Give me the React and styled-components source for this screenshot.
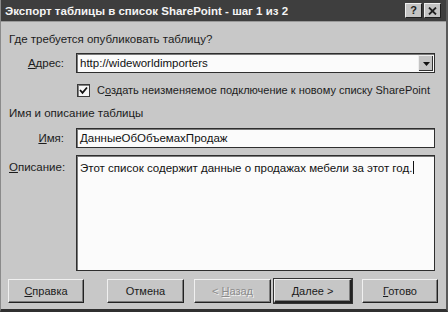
import React from "react";
import styled, { createGlobalStyle } from "styled-components";

const Global = createGlobalStyle`
  html, body { margin: 0; padding: 0; background: #c9c9c9; }
  body { font-family: "Liberation Sans", Arial, sans-serif; }
`;

const Window = styled.div`
  width: 448px;
  height: 312px;
  box-sizing: border-box;
  background: #c8c8c8;
  border-left: 1px solid #8a8a8a;
  border-right: 2px solid #5a5a5a;
  border-bottom: 3px solid #303030;
  display: flex;
  flex-direction: column;
  overflow: hidden;
`;

const TitleBar = styled.div`
  height: 21px;
  flex: none;
  background: #3e3e3e;
  border-bottom: 1px solid #9a9a9a;
  display: flex;
  align-items: center;
  justify-content: space-between;
  padding: 0 5px 0 4px;
`;

const Title = styled.span`
  color: #f4f4f4;
  font-weight: bold;
  font-size: 11.5px;
`;

const Controls = styled.div`
  display: flex;
  gap: 2px;
`;

const CtrlButton = styled.div`
  width: 15px;
  height: 13px;
  background: #c4c4c4;
  border-top: 1px solid #efefef;
  border-left: 1px solid #efefef;
  border-right: 1px solid #1e1e1e;
  border-bottom: 1px solid #1e1e1e;
  display: flex;
  align-items: center;
  justify-content: center;
  font-size: 11px;
  font-weight: bold;
  color: #202020;
  line-height: 1;
`;

const Body = styled.div`
  flex: 1;
  display: flex;
  flex-direction: column;
  padding: 10px 11px 0 8px;
  font-size: 11.5px;
  color: #1c1c1c;
`;

const SectionLabel = styled.div`
  height: 14px;
  line-height: 14px;
  margin-bottom: ${(p) => p.$mb || 0}px;
`;

const FieldGrid = styled.div`
  display: grid;
  grid-template-columns: 55px 1fr;
  column-gap: 12px;
  align-items: ${(p) => (p.$top ? "start" : "center")};
  margin-bottom: ${(p) => p.$mb || 0}px;
  flex: ${(p) => (p.$grow ? 1 : "none")};
`;

const FieldLabel = styled.div`
  text-align: right;
  line-height: 14px;
  padding-top: ${(p) => p.$pt || 0}px;
`;

const Box = styled.div`
  box-sizing: border-box;
  height: ${(p) => (p.$h ? `${p.$h}px` : "100%")};
  background: #fbfbfb;
  border: 1px solid #2e2e2e;
  box-shadow: inset 1px 1px 0 #7a7a7a;
  display: flex;
  align-items: ${(p) => (p.$top ? "flex-start" : "center")};
  padding: ${(p) => (p.$top ? "5px 0 0 3px" : "0 0 0 3px")};
  color: #111;
  position: relative;
`;

const Caret = styled.span`
  display: inline-block;
  width: 1px;
  height: 13px;
  background: #111;
  margin-left: 1px;
  vertical-align: -2px;
`;

const DropButton = styled.div`
  position: absolute;
  right: 1px;
  top: 1px;
  bottom: 1px;
  width: 15px;
  background: #c4c4c4;
  border-top: 1px solid #eee;
  border-left: 1px solid #eee;
  box-sizing: border-box;
  box-shadow: inset -1px -1px 0 #333;
  display: flex;
  align-items: center;
  justify-content: center;
`;

const CheckRow = styled.div`
  display: flex;
  align-items: center;
  gap: 7px;
  padding-left: 68px;
  height: 16px;
  margin-bottom: 8px;
  font-size: 11px;
`;

const CheckBox = styled.div`
  width: 13px;
  height: 13px;
  box-sizing: border-box;
  background: #f6f6f6;
  border: 1px solid #3a3a3a;
  box-shadow: inset 1px 1px 0 #808080;
  display: flex;
  align-items: center;
  justify-content: center;
`;

const U = styled.span`
  text-decoration: underline;
  text-underline-offset: 1px;
`;

const ButtonRow = styled.div`
  display: flex;
  padding: 8px 0 0 7px;
  height: 24px;
  margin-bottom: 6px;
  flex: none;
`;

const Btn = styled.div`
  box-sizing: border-box;
  width: ${(p) => p.$w || 77}px;
  margin-left: ${(p) => p.$ml || 0}px;
  height: 24px;
  background: #c6c6c6;
  border-top: 1px solid #f0f0f0;
  border-left: 1px solid #f0f0f0;
  border-right: ${(p) => (p.$default ? 2 : 1)}px solid #222;
  border-bottom: ${(p) => (p.$default ? 2 : 1)}px solid #222;
  box-shadow: inset -1px -1px 0 #7c7c7c
    ${(p) => (p.$default ? ", 0 0 0 1px #333" : "")};
  display: flex;
  align-items: center;
  justify-content: center;
  font-size: 11px;
  color: ${(p) => (p.$disabled ? "#8c8c8c" : "#1a1a1a")};
  text-shadow: ${(p) => (p.$disabled ? "1px 1px 0 #f2f2f2" : "none")};
`;

export default function App() {
  return (
    <>
      <Global />
      <Window>
        <TitleBar>
          <Title>Экспорт таблицы в список SharePoint - шаг 1 из 2</Title>
          <Controls>
            <CtrlButton>?</CtrlButton>
            <CtrlButton>
              <svg width="9" height="8" viewBox="0 0 9 8">
                <path d="M1 0.5 L8 7.5 M8 0.5 L1 7.5" stroke="#202020" strokeWidth="1.8" />
              </svg>
            </CtrlButton>
          </Controls>
        </TitleBar>
        <Body>
          <SectionLabel $mb={7}>Где требуется опубликовать таблицу?</SectionLabel>
          <FieldGrid $mb={9}>
            <FieldLabel>
              <U>А</U>дрес:
            </FieldLabel>
            <Box $h={20}>
              http://wideworldimporters
              <DropButton>
                <svg width="7" height="4" viewBox="0 0 7 4">
                  <path d="M0 0 H7 L3.5 4 Z" fill="#111" />
                </svg>
              </DropButton>
            </Box>
          </FieldGrid>
          <CheckRow>
            <CheckBox>
              <svg width="9" height="9" viewBox="0 0 9 9">
                <path d="M1 4 L3.5 6.8 L8 1.5" stroke="#111" strokeWidth="1.8" fill="none" />
              </svg>
            </CheckBox>
            <span>
              С<U>о</U>здать неизменяемое подключение к новому списку SharePoint
            </span>
          </CheckRow>
          <SectionLabel $mb={8}>Имя и описание таблицы</SectionLabel>
          <FieldGrid $mb={7}>
            <FieldLabel>
              <U>И</U>мя:
            </FieldLabel>
            <Box $h={20}>ДанныеОбОбъемахПродаж</Box>
          </FieldGrid>
          <FieldGrid $top $grow>
            <FieldLabel $pt={5}>
              <U>О</U>писание:
            </FieldLabel>
            <Box $top>
              <span>
                Этот список содержит данные о продажах мебели за этот год.
                <Caret />
              </span>
            </Box>
          </FieldGrid>
        </Body>
        <ButtonRow>
          <Btn $w={76}>
            <span>
              <U>С</U>правка
            </span>
          </Btn>
          <Btn $ml={23}>Отмена</Btn>
          <Btn $ml={10} $disabled>
            <span>
              &lt; <U>Н</U>азад
            </span>
          </Btn>
          <Btn $ml={3} $w={78} $default>
            <span>
              <U>Д</U>алее &gt;
            </span>
          </Btn>
          <Btn $ml={10} $w={76}>
            <span>
              <U>Г</U>отово
            </span>
          </Btn>
        </ButtonRow>
      </Window>
    </>
  );
}
